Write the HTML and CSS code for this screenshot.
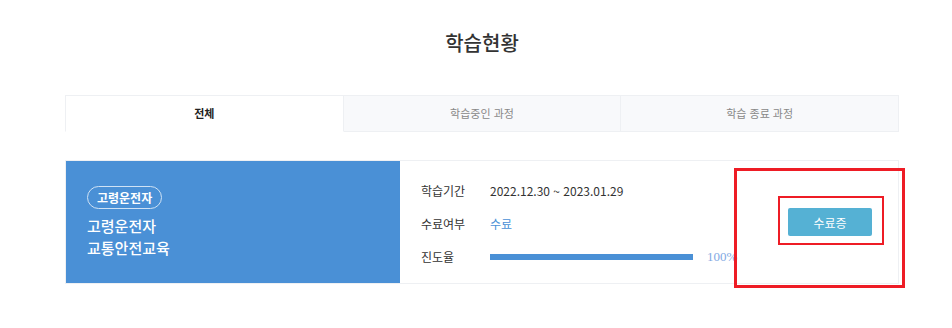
FILE: index.html
```html
<!DOCTYPE html>
<html lang="ko">
<head>
  <meta charset="UTF-8">
  <meta name="viewport" content="width=device-width, initial-scale=1.0">
  <link rel="stylesheet" href="styles.css">
  <title>학습현황</title>
</head>
<body>
  <div class="wrap">
    <h2 class="page-title">학습현황</h2>

    <ul class="tabs">
      <li class="tab active">전체</li>
      <li class="tab">학습중인 과정</li>
      <li class="tab">학습 종료 과정</li>
    </ul>

    <div class="course">
      <div class="course-cover">
        <span class="badge">고령운전자</span>
        <p class="course-name">고령운전자<br>교통안전교육</p>
      </div>
      <div class="course-info">
        <div class="row">
          <span class="label">학습기간</span>
          <span class="value">2022.12.30 ~ 2023.01.29</span>
        </div>
        <div class="row">
          <span class="label">수료여부</span>
          <span class="value done">수료</span>
        </div>
        <div class="row">
          <span class="label">진도율</span>
          <div class="bar"><div class="bar-fill" style="width: 100%"></div></div>
          <span class="percent">100%</span>
        </div>
      </div>
      <div class="course-action">
        <button class="cert-btn">수료증</button>
      </div>

      <!-- annotation boxes -->
      <div class="mark mark-outer"></div>
      <div class="mark mark-inner"></div>
    </div>
  </div>
</body>
</html>
```

FILE: styles.css
```css
html, body {
  min-height: 328px;
}

body {
  margin: 0;
  background-color: #fff;
  font-family: "Noto Sans CJK KR", "Noto Sans", sans-serif;
  color: #333;
}

.wrap {
  width: 834px;
  margin-left: 65px;
  padding-top: 29px;
}

.page-title {
  margin: 0;
  text-align: center;
  font-size: 20px;
  font-weight: 500;
  line-height: 28px;
  color: #333;
}

.tabs {
  display: flex;
  list-style: none;
  margin: 38px 0 0;
  padding: 0;
}

.tab {
  flex: 1;
  height: 35px;
  line-height: 35px;
  text-align: center;
  font-size: 11px;
  color: #888;
  background-color: #f8f9fb;
  border: 1px solid #eef0f3;
  border-left: none;
}

.tab:first-child {
  border-left: 1px solid #eef0f3;
}

.tab.active {
  background-color: #fff;
  color: #222;
  font-weight: 700;
  border-bottom-color: #fff;
}

.course {
  position: relative;
  display: flex;
  margin-top: 28px;
  height: 122px;
  border: 1px solid #eef0f3;
}

.course-cover {
  width: 313px;
  padding: 23px 0 0 21px;
  background-color: #4a90d6;
  color: #fff;
}

.badge {
  display: inline-block;
  padding: 0 9px;
  height: 21px;
  line-height: 21px;
  border: 1px solid #cfe2f5;
  border-radius: 12px;
  font-size: 12px;
  font-weight: 700;
}

.course-name {
  margin: 6px 0 0;
  font-size: 15px;
  font-weight: 500;
  line-height: 22px;
}

.course-info {
  width: 334px;
  padding: 13px 0 0 21px;
}

.row {
  display: flex;
  align-items: center;
  height: 33px;
  font-size: 12px;
}

.label {
  width: 69px;
  color: #333;
}

.value {
  color: #333;
}

.value.done {
  color: #4a90d6;
}

.bar {
  width: 203px;
  height: 6px;
  background-color: #e6e6e6;
}

.bar-fill {
  height: 100%;
  background-color: #4a90d6;
}

.percent {
  margin-left: 14px;
  color: #7fa9e3;
  font-family: "Liberation Serif", serif;
  font-size: 13px;
}

.course-action {
  flex: 1;
  display: flex;
  align-items: center;
  padding-left: 33px;
}

.cert-btn {
  width: 84px;
  height: 28px;
  border: none;
  border-radius: 2px;
  background-color: #55b1d4;
  color: #fff;
  font-family: inherit;
  font-size: 12px;
  cursor: pointer;
}

.mark {
  position: absolute;
  box-sizing: border-box;
  border: 3px solid #ee1c25;
}

.mark-outer {
  left: 668px;
  top: 7px;
  width: 171px;
  height: 120px;
}

.mark-inner {
  left: 712px;
  top: 35px;
  width: 106px;
  height: 49px;
  border-width: 2px;
}
```
